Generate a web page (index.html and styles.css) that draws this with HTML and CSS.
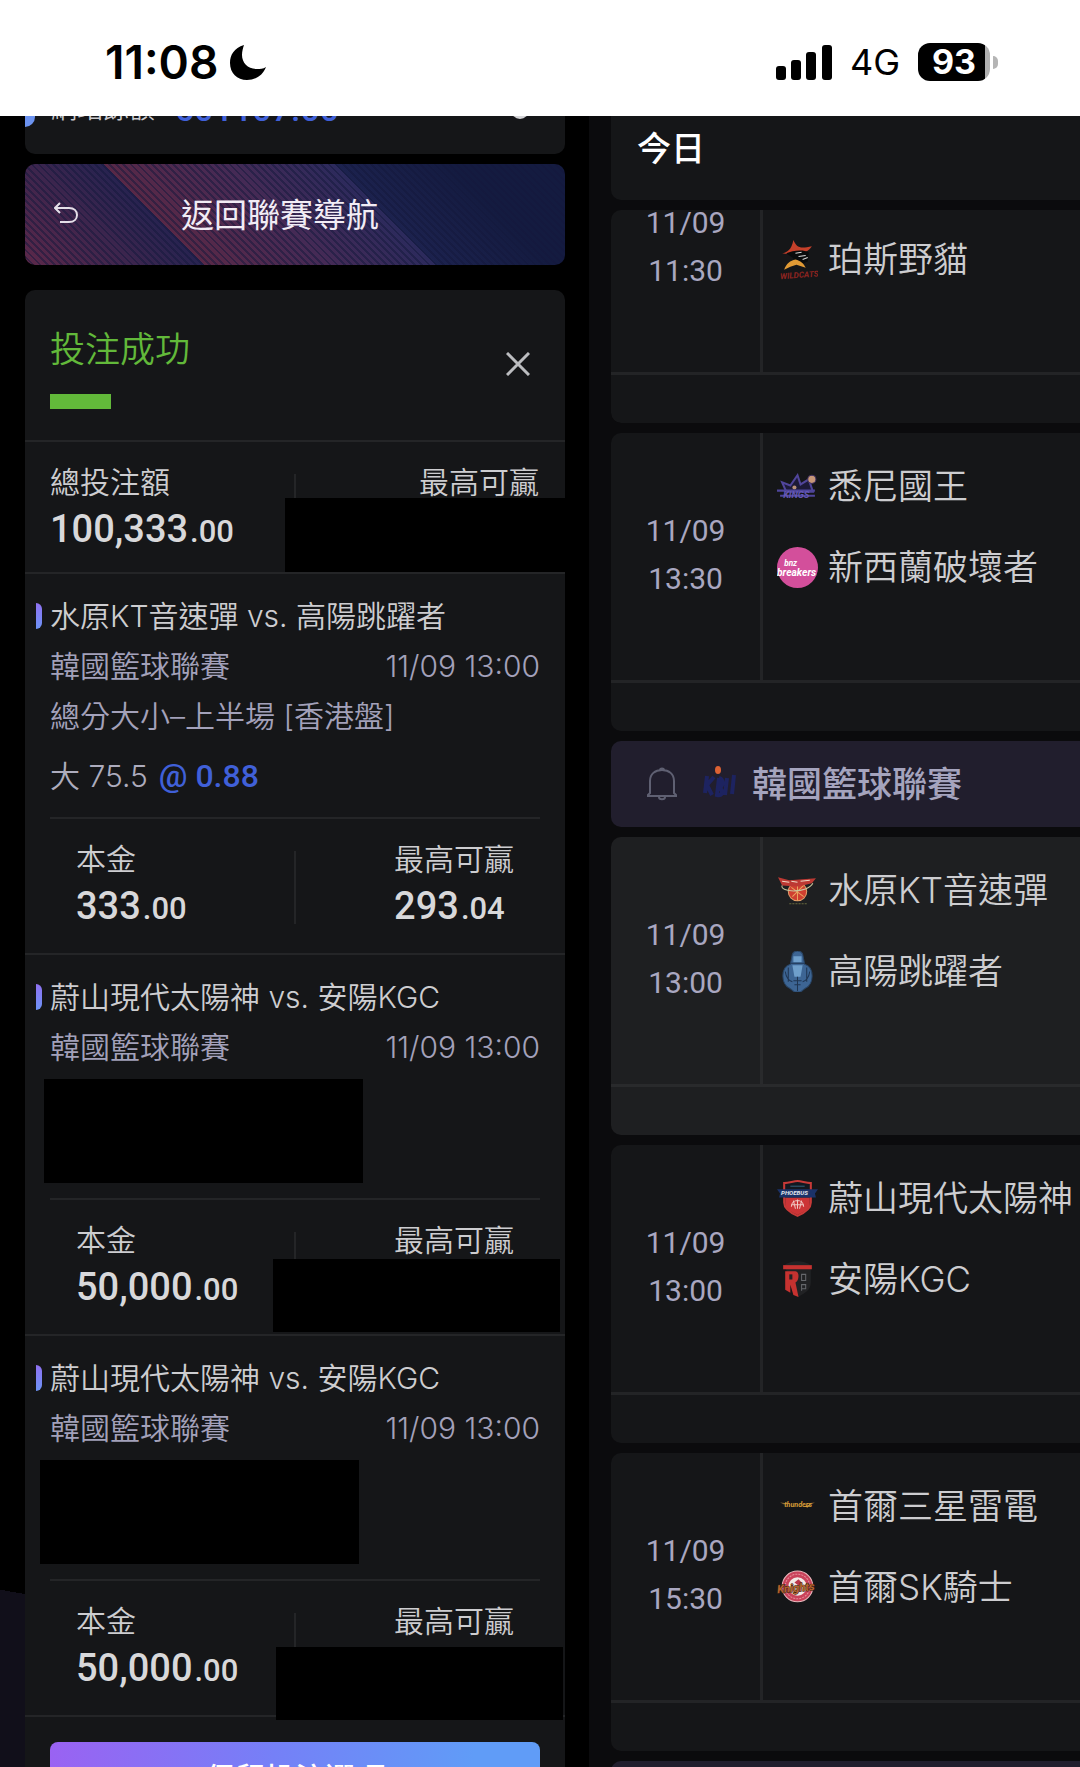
FILE: index.html
```
<!DOCTYPE html>
<html lang="zh-Hant">

<head>
    <meta charset="UTF-8">
    <meta name="viewport" content="width=device-width, initial-scale=1.0">
    <title>投注成功</title>
    <link rel="stylesheet" href="styles.css">
</head>

<body>
    <div class="screen">
        <header class="statusBar">
            <div class="statusLeft">
                <span class="clock">11:08</span>
                <svg class="moon" viewBox="0 0 36 36" aria-hidden="true">
                    <path d="M14 1C4 4 0 11 0 19c0 10 7 17 17 17 9 0 16-5 19-13-3 2-6 2-9 2-9 0-15-6-15-14 0-4 1-7 2-10z" />
                </svg>
            </div>
            <div class="statusRight">
                <svg class="signal" viewBox="0 0 56 35" aria-hidden="true">
                    <rect x="0" y="21" width="10" height="14" rx="3" />
                    <rect x="15" y="15" width="10" height="20" rx="3" />
                    <rect x="30" y="7" width="10" height="28" rx="3" />
                    <rect x="46" y="0" width="10" height="35" rx="3" />
                </svg>
                <span class="network">4G</span>
                <div class="battery"><span class="batteryLevel">93</span></div>
            </div>
        </header>

        <main class="main">
            <section class="slip">
                <div class="balanceCard">
                    <span class="balanceDot"></span>
                    <span class="balanceLabel">網站餘額</span>
                    <span class="balanceValue">601107.00</span>
                    <span class="balanceKnob"></span>
                </div>

                <button class="backBtn">
                    <svg class="backIcon" viewBox="0 0 24 22" aria-hidden="true">
                        <path d="M6 1L1 6l5 5M1 6h14c5 0 8 3 8 7s-3 7-8 7H6" />
                    </svg>
                    <span class="backText">返回聯賽導航</span>
                </button>

                <div class="betCard">
                    <div class="betHead">
                        <div>
                            <h1 class="heading">投注成功</h1>
                            <div class="headingBar"></div>
                        </div>
                        <button class="closeBtn" aria-label="關閉">
                            <svg viewBox="0 0 24 24" aria-hidden="true">
                                <path d="M1 1l22 22M23 1L1 23" />
                            </svg>
                        </button>
                    </div>

                    <div class="total sums">
                        <div class="sum">
                            <span class="label">總投注額</span>
                            <span class="amount">100,333<small>.00</small></span>
                        </div>
                        <span class="sumLine"></span>
                        <div class="sum sumRight">
                            <span class="label">最高可贏</span>
                        </div>
                        <div class="mask maskTotal"></div>
                    </div>

                    <article class="bet">
                        <h2 class="betTitle">水原KT音速彈 vs. 高陽跳躍者</h2>
                        <div class="betRow"><span>韓國籃球聯賽</span><span>11/09 13:00</span></div>
                        <div class="betRow">總分大小–上半場 [香港盤]</div>
                        <div class="betPick"><span>大 75.5</span><span class="odds">@ 0.88</span></div>
                        <div class="sums stake">
                            <div class="sum">
                                <span class="label">本金</span>
                                <span class="amount">333<small>.00</small></span>
                            </div>
                            <span class="sumLine"></span>
                            <div class="sum sumRight">
                                <span class="label">最高可贏</span>
                                <span class="amount">293<small>.04</small></span>
                            </div>
                        </div>
                    </article>

                    <article class="bet">
                        <h2 class="betTitle">蔚山現代太陽神 vs. 安陽KGC</h2>
                        <div class="betRow"><span>韓國籃球聯賽</span><span>11/09 13:00</span></div>
                        <div class="betRow"></div>
                        <div class="betPick"></div>
                        <div class="mask maskPick"></div>
                        <div class="sums stake">
                            <div class="sum">
                                <span class="label">本金</span>
                                <span class="amount">50,000<small>.00</small></span>
                            </div>
                            <span class="sumLine"></span>
                            <div class="sum sumRight">
                                <span class="label">最高可贏</span>
                            </div>
                        </div>
                        <div class="mask maskWin"></div>
                    </article>

                    <article class="bet betLast">
                        <h2 class="betTitle">蔚山現代太陽神 vs. 安陽KGC</h2>
                        <div class="betRow"><span>韓國籃球聯賽</span><span>11/09 13:00</span></div>
                        <div class="betRow"></div>
                        <div class="betPick"></div>
                        <div class="mask maskPick"></div>
                        <div class="sums stake">
                            <div class="sum">
                                <span class="label">本金</span>
                                <span class="amount">50,000<small>.00</small></span>
                            </div>
                            <span class="sumLine"></span>
                            <div class="sum sumRight">
                                <span class="label">最高可贏</span>
                            </div>
                        </div>
                        <div class="mask maskWin"></div>
                    </article>

                    <div class="betFoot">
                        <button class="keepBtn">保留投注選項</button>
                    </div>
                </div>
            </section>

            <section class="matches">
                <h2 class="today">今日</h2>

                <!-- first match is scrolled half way under the date bar -->
                <div class="matchClip">
                    <article class="match">
                        <div class="matchTime"><span>11/09</span><span>11:30</span></div>
                        <div class="teams">
                            <div class="team"></div>
                            <div class="team">
                                <svg class="logo" viewBox="0 0 40 40" aria-hidden="true">
                                    <path d="M5 14c5-1 9-3 11-13 3 7 6 9 18 6-3 5-8 7-14 7-6 1-11 1-15 0z" fill="#c5402a" />
                                    <path d="M9 14c6-3 17-4 22-1l-1 9-8 3-7-7z" fill="#0a0b0c" />
                                    <path d="M18 14l6-1M21 17l7-1M25 20l5-2" stroke="#d8d8d8" stroke-width="1" />
                                    <path d="M7 30c2-6 6-9 11-10 5 1 8 4 10 8l-9-3-6 2z" fill="#e09a35" />
                                    <text x="3" y="38" class="logoText" font-size="8" fill="#8e2420" transform="rotate(-4 20 36)">WILDCATS</text>
                                </svg>
                                <span>珀斯野貓</span>
                            </div>
                        </div>
                        <div class="matchFoot"></div>
                    </article>
                </div>

                <article class="match">
                    <div class="matchTime"><span>11/09</span><span>13:30</span></div>
                    <div class="teams">
                        <div class="team">
                            <svg class="logo" viewBox="0 0 40 40" aria-hidden="true">
                                <path d="M9 25L5 16l8 3 7-10 3 9 8-5 4 12z" fill="#1d1a38" stroke="#50459a" stroke-width="2" />
                                <circle cx="34" cy="13" r="4" fill="#c79778" stroke="#3a2d5c" />
                                <circle cx="17" cy="21" r="2" fill="#b9927a" />
                                <path d="M0 24h37M3 29h34" stroke="#4e459b" stroke-width="2" />
                                <text x="6" y="31" class="logoText" font-size="9" fill="#6358b5">KINGS</text>
                            </svg>
                            <span>悉尼國王</span>
                        </div>
                        <div class="team">
                            <svg class="logo" viewBox="0 0 40 40" aria-hidden="true">
                                <circle cx="20" cy="20" r="20" fill="#d34f9b" />
                                <text x="7" y="19" class="logoText" font-size="8" fill="#fff">bnz</text>
                                <text x="0" y="28" class="logoText" font-size="10" fill="#fff">breakers</text>
                            </svg>
                            <span>新西蘭破壞者</span>
                        </div>
                    </div>
                    <div class="matchFoot"></div>
                </article>

                <div class="league">
                    <svg class="bell" viewBox="0 0 30 34" aria-hidden="true">
                        <path d="M1 29v-1l2-2V14C3 7 8 3 15 3s12 4 12 11v12l2 2v1zM12 30c0 3 6 3 6 0M13 3c0-2 4-2 4 0" />
                    </svg>
                    <svg class="leagueLogo" viewBox="0 0 34 34" aria-hidden="true">
                        <ellipse cx="15" cy="5" rx="3" ry="4" fill="#dd6233" />
                        <path d="M4 11L2 28M11 12L4 20l5 10M16 13l-2 17c5 1 7-3 3-7 4-4 3-9-1-10M24 13l-2 17M31 10l-2 19" fill="none" stroke="#1d2360" stroke-width="4" />
                    </svg>
                    <span class="leagueName">韓國籃球聯賽</span>
                </div>

                <article class="match matchActive">
                    <div class="matchTime"><span>11/09</span><span>13:00</span></div>
                    <div class="teams">
                        <div class="team">
                            <svg class="logo" viewBox="0 0 40 40" aria-hidden="true">
                                <circle cx="20" cy="21" r="9" fill="#cf3f30" stroke="#e3a06b" />
                                <path d="M14 17l12 9M15 26l11-11M20 13v17" stroke="#e9a45f" stroke-width="1" />
                                <path d="M1 7l11 3 26-2-4 5-13 3-16-1z" fill="#bd3933" />
                                <path d="M5 11l7 1M14 11l6 1M23 11l9-1" stroke="#efd7c4" stroke-width="1" />
                                <path d="M5 15c-3 7 25 8 30-2" fill="none" stroke="#c9c59c" stroke-width="1" />
                                <path d="M12 33h17" stroke="#68693f" stroke-dasharray="2 1" />
                            </svg>
                            <span>水原KT音速彈</span>
                        </div>
                        <div class="team">
                            <svg class="logo" viewBox="0 0 40 40" aria-hidden="true">
                                <path d="M15 3c2-4 8-4 10 0l2 10c10 3 9 20 1 23l-5 4h-6l-5-4C4 33 3 16 13 13z" fill="#3d6594" stroke="#294566" />
                                <path d="M16 5h8v6h-8zM15 14h10l-2 11h-6z" fill="#6f9fcb" />
                                <path d="M13 12h14M11 16v14M29 16v14M8 20c1 6 3 9 7 10M32 20c-1 6-3 9-7 10M16 29h8M17 33h6M20 25v14" fill="none" stroke="#1f3552" stroke-width="1" />
                            </svg>
                            <span>高陽跳躍者</span>
                        </div>
                    </div>
                    <div class="matchFoot"></div>
                </article>

                <article class="match">
                    <div class="matchTime"><span>11/09</span><span>13:00</span></div>
                    <div class="teams">
                        <div class="team">
                            <svg class="logo" viewBox="0 0 40 40" aria-hidden="true">
                                <path d="M7 5c5 0 9-2 13-2 4 0 8 2 13 2v19c0 6-6 10-13 13C13 34 7 30 7 24z" fill="#131820" stroke="#c73a38" stroke-width="2" />
                                <path d="M8 19h24v6c0 5-6 8-12 11-6-3-12-6-12-11z" fill="#cc3436" />
                                <path d="M14 28c0-8 12-8 12 0M14 26h12M20 21v9M16 22l2 8M24 22l-2 8" fill="none" stroke="#f0c9c5" stroke-width="1" />
                                <path d="M0 11h40l-3 4 1 4H2l1-4z" fill="#1b3268" />
                                <path d="M13 8h14" stroke="#35617a" />
                                <text x="4" y="17" class="logoText" font-size="6" fill="#e3e6ee">PHOEBUS</text>
                            </svg>
                            <span>蔚山現代太陽神</span>
                        </div>
                        <div class="team">
                            <svg class="logo" viewBox="0 0 40 40" aria-hidden="true">
                                <path d="M7 6c7-5 19-5 26 0v17c0 7-6 11-13 14z" fill="#212224" />
                                <path d="M6 6h28v4H6z" fill="#c63230" />
                                <path d="M8 12h10c4 0 4 9 0 11l3 14-5-2-3-10v8l-5-3z" fill="#c63230" />
                                <path d="M12 15h3v5h-3z" fill="#212224" />
                                <path d="M24 15h4v6h-4zM24 31v-6h4v4h-4" fill="none" stroke="#66686c" stroke-width="1" />
                            </svg>
                            <span>安陽KGC</span>
                        </div>
                    </div>
                    <div class="matchFoot"></div>
                </article>

                <article class="match">
                    <div class="matchTime"><span>11/09</span><span>15:30</span></div>
                    <div class="teams">
                        <div class="team">
                            <svg class="logo" viewBox="0 0 40 40" aria-hidden="true">
                                <path d="M3 16l9 1-5 1zM37 16l-9 1 5 1z" fill="#8d6a35" />
                                <text x="7" y="20" class="logoText" font-size="7" fill="#d79c37">thunders</text>
                                <path d="M26 20l7-2-3 3z" fill="#d79c37" />
                            </svg>
                            <span>首爾三星雷電</span>
                        </div>
                        <div class="team">
                            <svg class="logo" viewBox="0 0 40 40" aria-hidden="true">
                                <circle cx="20" cy="19" r="15" fill="#c9425a" stroke="#e9b9bd" stroke-width="1" />
                                <circle cx="20" cy="19" r="12" fill="none" stroke="#e58f9a" stroke-dasharray="2 1" />
                                <circle cx="20" cy="19" r="9" fill="#f1e9e4" />
                                <path d="M17 15l4-3 4 4-4 2z" fill="#b8384b" />
                                <text x="0" y="24" class="logoText" font-size="11" fill="#b5642c" stroke="#3a1d12" stroke-width="1" paint-order="stroke" transform="rotate(-5 20 20)">Knights</text>
                            </svg>
                            <span>首爾SK騎士</span>
                        </div>
                    </div>
                    <div class="matchFoot"></div>
                </article>

                <div class="league"></div>
            </section>
        </main>
    </div>
</body>

</html>
```
FILE: styles.css
```
* {
    box-sizing: border-box;
    padding: 0;
    margin: 0;
}

body {
    background-color: #000;
    color: #cdcdd0;
    font-family: Inter, "Noto Sans CJK TC", sans-serif;
    font-size: 30px;
    font-weight: 350;
}

button {
    border: none;
    background: none;
    color: inherit;
    font: inherit;
    cursor: pointer;
}

.screen {
    height: 100vh;
    display: flex;
    flex-direction: column;
    overflow: hidden;
}

/* status bar */

.statusBar {
    flex: none;
    height: 116px;
    padding: 8px 82px 0 105px;
    display: flex;
    justify-content: space-between;
    align-items: center;
    background-color: #fff;
    color: #000;
}

.statusLeft {
    display: flex;
    align-items: center;
    gap: 12px;
}

.clock {
    font-size: 46px;
    font-weight: 600;
}

.moon {
    width: 36px;
    height: 36px;
}

.statusRight {
    display: flex;
    align-items: center;
    gap: 18px;
}

.signal {
    width: 56px;
    height: 35px;
}

.network {
    font-size: 36px;
    font-weight: 400;
}

.battery {
    display: flex;
    align-items: center;
    gap: 3px;
}

.battery::after {
    content: "";
    width: 5px;
    height: 13px;
    border-radius: 0 6px 6px 0;
    background-color: #b5b5b5;
}

.batteryLevel {
    width: 72px;
    height: 38px;
    border-radius: 12px;
    background: linear-gradient(to right, #000 93%, #b0b0b0 93%);
    color: #fff;
    font-size: 34px;
    font-weight: 700;
    line-height: 38px;
    text-align: center;
}

.main {
    flex: 1;
    min-height: 0;
    display: grid;
    grid-template-columns: minmax(0, 6fr) minmax(0, 5fr);
}

/* bet slip */

.slip {
    padding: 0 24px 0 25px;
    overflow: hidden;
    background: linear-gradient(190deg, transparent 5px, #110f1a 5px) left bottom / 25px 178px no-repeat #000;
}

.balanceCard {
    height: 38px;
    margin-bottom: 10px;
    padding: 0 36px 27px 0;
    display: flex;
    align-items: flex-end;
    overflow: hidden;
    border-radius: 0 0 10px 10px;
    background-color: #151618;
    line-height: 36px;
}

.balanceDot {
    width: 10px;
    height: 20px;
    margin-right: 16px;
    border-radius: 0 10px 10px 0;
    background-color: #6c93f0;
}

.balanceLabel {
    margin-right: 20px;
    font-size: 26px;
}

.balanceValue {
    color: #4060d8;
    font-family: Roboto, sans-serif;
    font-size: 34px;
    font-weight: 500;
}

.balanceKnob {
    width: 18px;
    height: 18px;
    margin: 0 0 8px auto;
    border-radius: 50%;
    background-color: #d5d5d8;
}

.backBtn {
    width: 100%;
    height: 101px;
    margin-bottom: 25px;
    padding: 0 29px 4px;
    display: flex;
    align-items: center;
    border-radius: 10px;
    background:
        repeating-linear-gradient(45deg, rgba(20, 24, 60, 0.5) 0 2px, transparent 2px 5px),
        linear-gradient(45deg, #5c2849 0%, #272350 28%, #582846 28%, #482a54 45%, #2c2a5c 64%, #1c224e 64%, #141b40 82%);
    color: #f1ecf5;
}

.backIcon {
    width: 24px;
    height: 22px;
    fill: none;
    stroke: #e4dfe8;
    stroke-width: 2;
}

.backText {
    flex: 1;
    padding-right: 54px;
    font-size: 33px;
    font-weight: 400;
}

.betCard {
    border-radius: 10px;
    background-color: #151618;
}

.betHead {
    padding: 34px 25px 31px;
    display: flex;
    justify-content: space-between;
    align-items: center;
}

.heading {
    color: #62b93a;
    font-size: 35px;
    font-weight: 350;
    line-height: 50px;
}

.headingBar {
    width: 61px;
    height: 15px;
    margin-top: 20px;
    background-color: #62b93a;
}

.closeBtn {
    width: 44px;
    height: 44px;
    margin-bottom: 6px;
    padding: 10px;
}

.closeBtn svg {
    display: block;
    width: 24px;
    height: 24px;
    fill: none;
    stroke: #bcbdc0;
    stroke-width: 3;
}

.sums {
    position: relative;
    display: grid;
    grid-template-columns: 1fr 2px 1fr;
    border-top: 2px solid #242527;
}

.total {
    padding: 20px 26px 16px 25px;
}

.stake {
    padding: 20px 26px;
}

.sum {
    display: flex;
    flex-direction: column;
}

.sumRight {
    justify-self: end;
}

.sumLine {
    height: 73px;
    margin-top: 12px;
    background-color: #242527;
}

.label {
    line-height: 40px;
}

.amount {
    color: #d8d8da;
    font-family: Roboto, sans-serif;
    font-size: 38px;
    font-weight: 500;
    line-height: 54px;
}

.amount small {
    margin-left: 2px;
    font-size: 31px;
    line-height: 1;
}

.bet {
    position: relative;
    padding: 17px 25px 0;
    border-top: 2px solid #242527;
}

.betTitle {
    margin-left: -14px;
    display: flex;
    align-items: center;
    gap: 8px;
    font-size: 30px;
    font-weight: 350;
    line-height: 50px;
    white-space: nowrap;
}

.betTitle::before {
    content: "";
    width: 6px;
    height: 26px;
    border-radius: 0 6px 6px 0;
    background: linear-gradient(#8f71f2, #6c93f5);
}

.betRow {
    height: 50px;
    display: flex;
    justify-content: space-between;
    color: #a3a1ba;
    line-height: 50px;
    white-space: nowrap;
}

.betPick {
    height: 50px;
    margin: 10px 0 16px;
    display: flex;
    gap: 11px;
    color: #adacbd;
    line-height: 50px;
}

.odds {
    color: #4060d8;
    font-family: Roboto, sans-serif;
    font-size: 32px;
    font-weight: 500;
}

/* blacked out amounts */

.mask {
    position: absolute;
    background-color: #000;
}

.maskTotal {
    top: 56px;
    right: -4px;
    width: 284px;
    height: 74px;
}

.maskPick {
    top: 124px;
    left: 19px;
    width: 319px;
    height: 104px;
}

.maskWin {
    right: 5px;
    bottom: 2px;
    width: 287px;
    height: 73px;
}

.betLast .maskPick {
    left: 15px;
}

.betLast .maskWin {
    right: 2px;
    bottom: -5px;
}

.betFoot {
    padding: 25px 25px 24px;
    border-top: 2px solid #242527;
}

.keepBtn {
    width: 100%;
    height: 68px;
    border-radius: 8px;
    background: linear-gradient(100deg, #9a62f2, #7580f7 45%, #609cf7 85%);
    color: #fff;
    font-weight: 500;
}

/* match list */

.matches {
    padding-left: 22px;
    display: flex;
    flex-direction: column;
    gap: 10px;
    overflow: hidden;
    background-color: #0b0b0d;
}

.matches > * {
    flex: none;
}

.today {
    height: 84px;
    padding: 9px 26px;
    border-radius: 0 0 0 10px;
    background-color: #151618;
    color: #fff;
    font-size: 34px;
    font-weight: 500;
    line-height: 48px;
}

.matchClip {
    height: 213px;
    display: flex;
    flex-direction: column;
    justify-content: flex-end;
    overflow: hidden;
    border-radius: 10px 0 0 10px;
}

.match {
    flex: none;
    display: grid;
    grid-template-columns: 149px 1fr;
    grid-template-rows: 247px 51px;
    border-radius: 10px 0 0 10px;
    background-color: #151618;
}

.matchTime {
    padding-bottom: 4px;
    display: flex;
    flex-direction: column;
    justify-content: center;
    align-items: center;
    color: #a9a7c0;
    font-family: Roboto, sans-serif;
    font-weight: 400;
    line-height: 48px;
}

.teams {
    padding: 28px 0 0 14px;
    display: flex;
    flex-direction: column;
    gap: 31px;
    border-left: 3px solid #232426;
}

.team {
    height: 50px;
    display: flex;
    align-items: center;
    gap: 10px;
    font-size: 35px;
    line-height: 50px;
    white-space: nowrap;
}

.logo {
    flex: none;
    width: 41px;
    height: 41px;
}

.logoText {
    font-family: Roboto, sans-serif;
    font-style: italic;
    font-weight: 700;
}

.matchFoot {
    grid-column: 1 / 3;
    border-top: 3px solid #232426;
}

.matchActive {
    background-color: #1e1f21;
}

.matchActive .teams,
.matchActive .matchFoot {
    border-color: #292a2c;
}

.league {
    height: 86px;
    padding-left: 36px;
    display: flex;
    align-items: center;
    border-radius: 10px 0 0 10px;
    background-color: #211e2d;
    color: #a5a4be;
    font-size: 35px;
    font-weight: 500;
}

.leagueName {
    padding-bottom: 6px;
}

.bell {
    width: 30px;
    height: 34px;
    margin-right: 26px;
    fill: none;
    stroke: #5f6072;
    stroke-width: 2;
}

.leagueLogo {
    width: 34px;
    height: 34px;
    margin: 0 15px 4px 0;
}
```
